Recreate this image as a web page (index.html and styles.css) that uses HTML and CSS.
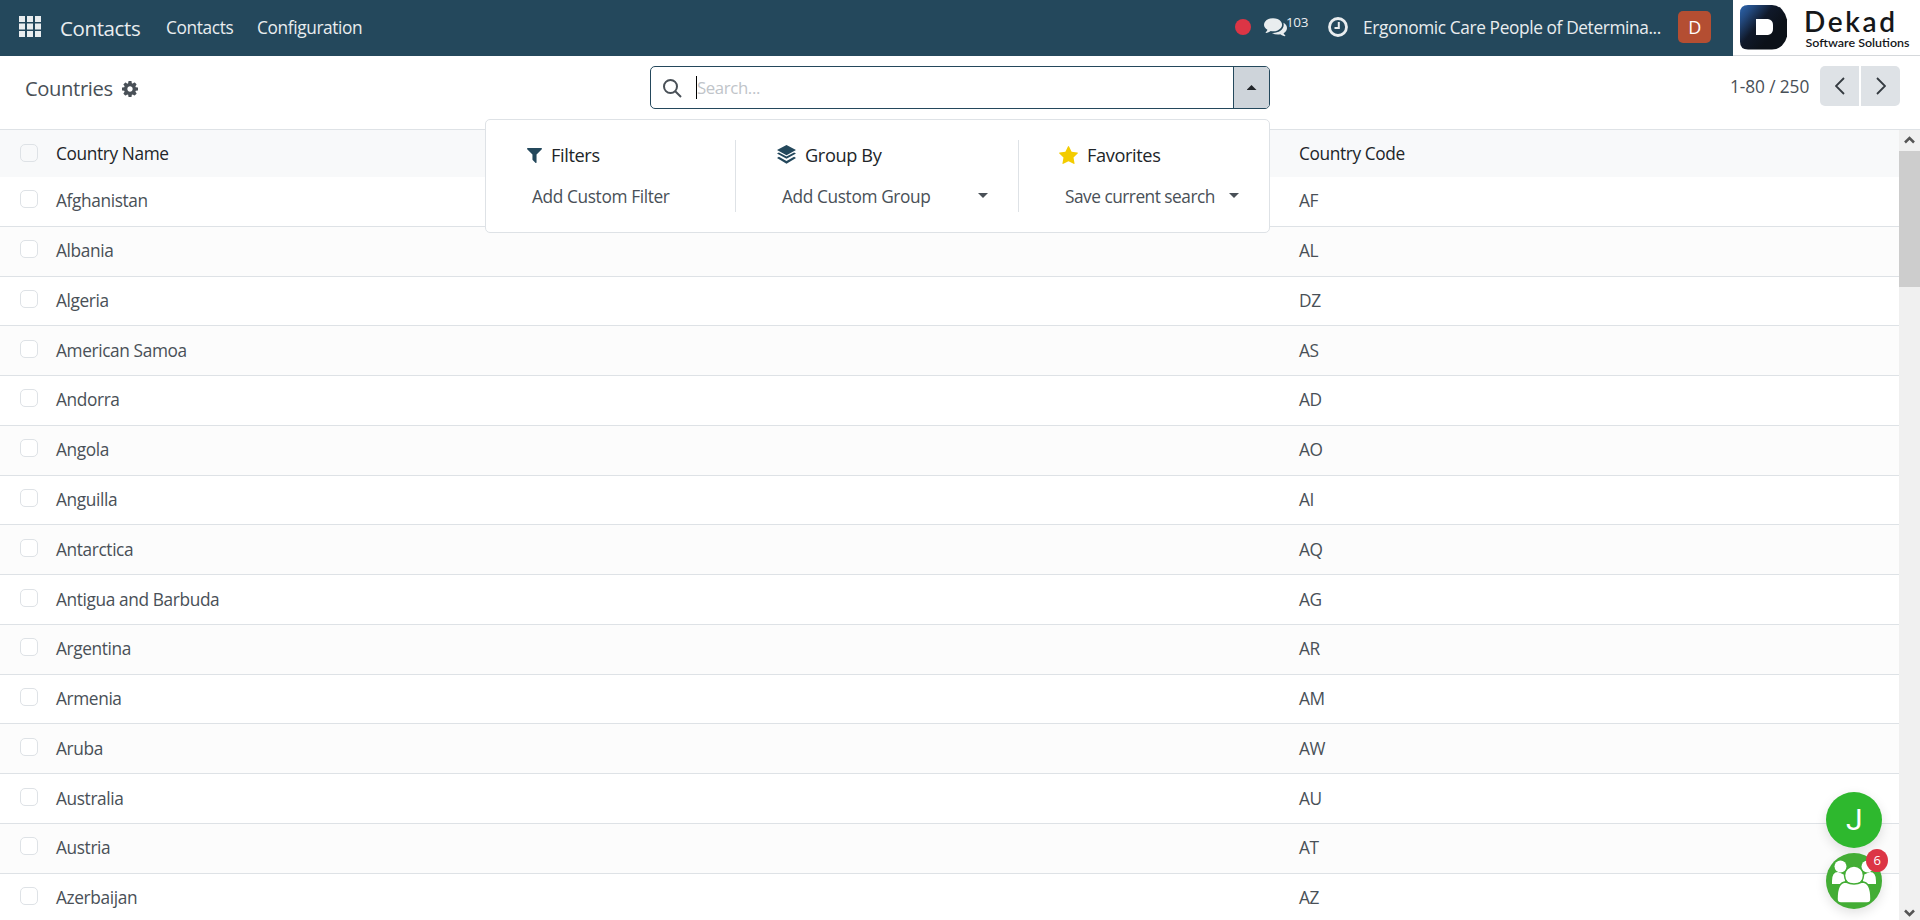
FILE: index.html
```html
<!DOCTYPE html>
<html lang="en">
<head>
  <meta charset="UTF-8">
  <title>Countries</title>
  <link rel="stylesheet" href="styles.css">
</head>
<body>
  <header class="navbar">
    <svg class="apps" viewBox="0 0 22 21"><path d="M0 0h6v6H0zM8 0h6v6H8zM16 0h6v6h-6zM0 7.500h6v6H0zM8 7.500h6v6H8zM16 7.500h6v6h-6zM0 15h6v6H0zM8 15h6v6H8zM16 15h6v6h-6z"/></svg>
    <a class="brand">Contacts</a>
    <a class="menu-contacts">Contacts</a>
    <a class="menu-config">Configuration</a>
    <div class="systray">
      <span class="dot"></span>
      <svg class="comments" viewBox="0 0 1792 1536"><path d="M1408 512q0 139-94 257t-256.500 186.500-353.500 68.500q-86 0-176-16-124 88-278 128-36 9-86 16h-3q-11 0-20.500-8t-11.500-21q-1-3-1-6.500t.5-6.500 2-6l2.500-5 3.500-5.500 4-5 4.500-5 4-4.500q5-6 23-25t26-29.500 22.500-29 25-38.500 20.500-44q-124-72-195-177t-71-224q0-139 94-257t256.500-186.500 353.500-68.500 353.500 68.500 256.500 186.500 94 257zm384 256q0 120-71 224.500t-195 176.500q10 24 20.500 44t25 38.500 22.500 29 26 29.500 23 25q1 1 4 4.500t4.500 5 4 5 3.500 5.500l2.500 5 2 6 .5 6.500-1 6.500q-3 14-13 22t-22 7q-50-7-86-16-154-40-278-128-90 16-176 16-271 0-472-132 58 4 88 4 161 0 309-45t264-129q125-92 192-212t67-254q0-77-23-152 129 71 204 178t75 230z"/></svg>
      <span class="count">103</span>
      <svg class="clock" viewBox="0 0 20 20"><circle cx="10" cy="10" r="8.500"/><path d="M10.800 5v6H6.500"/></svg>
      <span class="company">Ergonomic Care People of Determina...</span>
      <span class="avatar">D</span>
    </div>
    <div class="logo">
      <svg viewBox="0 0 187 55">
        <defs>
          <linearGradient id="logo-bg" x1="0" y1="0" x2="0.75" y2="0.6">
            <stop offset="0" stop-color="#2c65ae"/>
            <stop offset="0.25" stop-color="#234a80"/>
            <stop offset="0.6" stop-color="#10192a"/>
            <stop offset="1" stop-color="#0c1118"/>
          </linearGradient>
        </defs>
        <path fill="url(#logo-bg)" d="M15 5h24q6 0 10 4.500t5 10v17q-1 5-5 9t-10 4H15q-8 0-8-8V13q0-8 8-8z"/>
        <path fill="#fff" d="M23 19h12q5 1 5 6v4q0 5-5 6H23z"/>
        <text class="logo-name" x="71" y="31.500" textLength="91">Dekad</text>
        <text class="logo-sub" x="72.500" y="47" textLength="104" lengthAdjust="spacingAndGlyphs">Software Solutions</text>
      </svg>
    </div>
  </header>

  <div class="control-panel">
    <div class="title">
      <span>Countries</span>
      <svg viewBox="0 0 1536 1536"><path d="M1024 768q0-106-75-181t-181-75-181 75-75 181 75 181 181 75 181-75 75-181zm512-109v222q0 12-8 23t-20 13l-185 28q-19 54-39 91 35 50 107 138 10 12 10 25t-9 23q-27 37-99 108t-94 71q-12 0-26-9l-138-108q-44 23-91 38-16 136-29 186-7 28-36 28h-222q-14 0-24.500-8.500t-11.500-21.500l-28-184q-49-16-90-37l-141 107q-10 9-25 9-14 0-25-11-126-114-165-168-7-10-7-23 0-12 8-23 15-21 51-66.500t54-70.500q-27-50-41-99l-183-27q-13-2-21-12.500t-8-23.500v-222q0-12 8-23t19-13l186-28q14-46 39-92-40-57-107-138-10-12-10-24 0-10 9-23 26-36 98.500-107.500t94.500-71.500q13 0 26 10l138 107q44-23 91-38 16-136 29-186 7-28 36-28h222q14 0 24.500 8.500t11.500 21.500l28 184q49 16 90 37l142-107q9-9 24-9 13 0 25 10 129 119 165 170 7 8 7 22 0 12-8 23-15 21-51 66.500t-54 70.500q26 50 41 98l183 28q13 2 21 12.500t8 23.500z"/></svg>
    </div>
    <div class="search">
      <div class="search-box">
        <svg class="search-icon" viewBox="0 0 19 19"><circle cx="7.500" cy="7.500" r="6.500"/><path d="M12 12l6 6"/></svg>
        <span class="cursor"></span>
        <span class="placeholder">Search...</span>
      </div>
      <div class="search-toggle"><span class="caret up"></span></div>
      <div class="search-menu">
        <div class="menu-col filters">
          <h3><svg viewBox="0 0 1408 1408"><path d="M1403 39q17 41-14 70l-493 493v742q0 42-39 59-13 5-25 5-27 0-45-19l-256-256q-19-19-19-45v-486l-493-493q-31-29-14-70 17-39 59-39h1280q42 0 59 39z"/></svg>Filters</h3>
          <div class="menu-item">Add Custom Filter</div>
        </div>
        <div class="menu-col group-by">
          <h3><svg viewBox="0 0 18 18"><path d="M9 0l9 4.800-9 4.800-9-4.800zM0 8.100l1.800-1L9 11l7.200-3.900 1.800 1-9 4.900zM0 12.200l1.800-1L9 15.100l7.200-3.900 1.800 1L9 17.700z"/></svg>Group By</h3>
          <div class="menu-item">Add Custom Group<span class="caret"></span></div>
        </div>
        <div class="menu-col favorites">
          <h3><svg viewBox="0 0 1664 1587"><path d="M1664 615q0 22-26 48l-363 354 86 500q1 7 1 20 0 21-10.500 35.500t-30.500 14.500q-19 0-40-12l-449-236-449 236q-22 12-40 12-21 0-31.500-14.500t-10.500-35.500q0-6 2-20l86-500-364-354q-25-27-25-48 0-37 56-46l502-73 225-455q19-41 49-41t49 41l225 455 502 73q56 9 56 46z"/></svg>Favorites</h3>
          <div class="menu-item">Save current search<span class="caret"></span></div>
        </div>
      </div>
    </div>
    <div class="pager">
      <span>1-80 / 250</span>
      <button><svg viewBox="0 0 10 18"><path d="M9 1L1 9l8 8"/></svg></button>
      <button><svg viewBox="0 0 10 18"><path d="M1 1l8 8-8 8"/></svg></button>
    </div>
  </div>

  <main class="content">
    <div class="list">
      <div class="row head"><i class="check"></i><span>Country Name</span><span>Country Code</span></div>
      <div class="row"><i class="check"></i><span>Afghanistan</span><span>AF</span></div>
      <div class="row"><i class="check"></i><span>Albania</span><span>AL</span></div>
      <div class="row"><i class="check"></i><span>Algeria</span><span>DZ</span></div>
      <div class="row"><i class="check"></i><span>American Samoa</span><span>AS</span></div>
      <div class="row"><i class="check"></i><span>Andorra</span><span>AD</span></div>
      <div class="row"><i class="check"></i><span>Angola</span><span>AO</span></div>
      <div class="row"><i class="check"></i><span>Anguilla</span><span>AI</span></div>
      <div class="row"><i class="check"></i><span>Antarctica</span><span>AQ</span></div>
      <div class="row"><i class="check"></i><span>Antigua and Barbuda</span><span>AG</span></div>
      <div class="row"><i class="check"></i><span>Argentina</span><span>AR</span></div>
      <div class="row"><i class="check"></i><span>Armenia</span><span>AM</span></div>
      <div class="row"><i class="check"></i><span>Aruba</span><span>AW</span></div>
      <div class="row"><i class="check"></i><span>Australia</span><span>AU</span></div>
      <div class="row"><i class="check"></i><span>Austria</span><span>AT</span></div>
      <div class="row"><i class="check"></i><span>Azerbaijan</span><span>AZ</span></div>
    </div>
    <div class="scrollbar">
      <svg viewBox="0 0 11 8"><path d="M1 6.500l4.500-4.500L10 6.500"/></svg>
      <div class="thumb"></div>
      <svg viewBox="0 0 11 8"><path d="M1 1.500L5.500 6 10 1.500"/></svg>
    </div>
  </main>

  <div class="chat-heads">
    <div class="head-j">J</div>
    <div class="head-group">
      <svg viewBox="0 0 56 56">
        <circle cx="14.500" cy="13.500" r="6"/><circle cx="41.500" cy="13.500" r="6"/>
        <path d="M6 31v-3q0-9 6-9 8 3 8 5l-2 7zM50 31v-3q0-9-6-9-8 3-8 5l2 7z"/>
        <circle class="front" cx="28" cy="22.500" r="9.500"/>
        <path class="front" d="M11 46q0-17 9-17 8 4 16 0 9 0 9 17 0 4-4 4H15q-4 0-4-4z"/>
      </svg>
      <span class="badge">6</span>
    </div>
  </div>
</body>
</html>
```
FILE: styles.css
```css
* { box-sizing: border-box; }
body { margin: 0; height: 920px; overflow: hidden; display: flex; flex-direction: column; position: relative; background: #fff; color: #495057; font-family: "Open Sans", "Noto Sans", sans-serif; font-size: 17.3px; letter-spacing: -0.38px; line-height: 24px; }
svg { display: block; flex: none; }

.navbar { height: 56px; flex: none; background: #24485c; color: #e9edef; display: flex; align-items: center; padding-left: 19px; white-space: nowrap; }
.navbar svg { fill: #e9edef; }
.apps { width: 22px; height: 21px; margin-top: -3px; }
.brand { font-size: 20.5px; margin-left: 19px; width: 106px; }
.menu-contacts { width: 91px; }
.systray { display: flex; align-items: center; margin-left: auto; height: 56px; }
.dot { width: 16px; height: 16px; border-radius: 50%; background: #dc3545; margin: -3px 13px 0 0; }
.comments { width: 23px; height: 20px; }
.count { font-size: 13.5px; width: 42px; margin: -13px 0 0 -1px; }
.navbar .clock { width: 20px; height: 20px; margin: -2px 15px 0 0; fill: none; stroke: #e9edef; stroke-width: 2.8; }
.clock path { stroke-width: 2; }
.company { width: 315px; }
.avatar { width: 33px; height: 32px; margin: -2px 22px 0 0; border-radius: 5px; background: #b44e32; color: #fff; font-size: 18px; line-height: 32px; text-align: center; }
.logo { width: 187px; height: 56px; background: #fff; border-bottom: 1px solid #d5d8db; }
.logo svg { width: 187px; height: 55px; }
.logo text { font-family: Lato, sans-serif; font-weight: 600; fill: #15171a; letter-spacing: 0; }
.logo-name { font-size: 28px; }
.logo-sub { font-size: 12px; }

.control-panel { height: 73px; flex: none; display: flex; padding: 10px 20px 0 25px; }
.title { width: 625px; height: 44px; flex: none; display: flex; align-items: center; font-size: 20.2px; }
.title span { width: 97px; }
.title svg { width: 16px; height: 16px; margin-top: 1px; fill: #495057; }
.search { position: relative; width: 620px; height: 43px; flex: none; display: flex; border: 1px solid #24485c; border-radius: 5px; }
.search-box { flex: 1; display: flex; align-items: center; padding-left: 12px; }
.search-icon { width: 19px; height: 19px; margin-top: 1px; fill: none; stroke: #495057; stroke-width: 2; }
.cursor { width: 1px; height: 23px; margin: 0 0 1px 14px; background: #000; }
.placeholder { color: #c0c4c9; font-size: 16.8px; padding-top: 1px; }
.search-toggle { width: 36px; display: flex; align-items: center; justify-content: center; background: #ced4da; border-left: 1px solid #24485c; border-radius: 0 4px 4px 0; }
.caret { width: 10px; height: 5px; background: #495057; clip-path: polygon(0 0, 100% 0, 50% 100%); }
.caret.up { background: #212529; clip-path: polygon(0 100%, 100% 100%, 50% 0); }
.search-menu { position: absolute; z-index: 2; right: -1px; top: 52px; width: 785px; height: 114px; display: flex; padding: 20px 0; background: #fff; border: 1px solid #dee2e6; border-radius: 5px; }
.menu-col { padding-left: 41px; }
.menu-col + .menu-col { border-left: 1px solid #dee2e6; }
.filters { width: 249px; }
.group-by { width: 283px; }
.favorites { flex: 1; }
.menu-col h3 { display: flex; align-items: center; margin: 3px 0 18px; font-size: 18.2px; font-weight: normal; color: #212529; height: 24px; }
.menu-col svg { fill: #24485c; margin-right: 9px; width: 19px; height: 19px; margin-top: -1px; }
.filters svg { width: 15px; height: 15px; margin-top: 1px; }
.favorites svg { width: 19px; height: 18px; margin-left: -1px; fill: #f3cc00; }
.menu-item { display: flex; align-items: center; margin-left: 5px; white-space: nowrap; }
.menu-item .caret { margin: -3px 30px 0 auto; }
.favorites .menu-item { letter-spacing: -0.5px; }

.pager { width: 170px; height: 40px; margin-left: auto; display: flex; justify-content: flex-end; gap: 2px; line-height: 41px; letter-spacing: -0.1px; }
.pager span { width: 88px; white-space: nowrap; }
.pager button { width: 39px; height: 40px; padding: 0; border: 0; background: #dee2e6; display: flex; align-items: center; justify-content: center; border-radius: 5px 0 0 5px; }
.pager button:last-child { border-radius: 0 5px 5px 0; }
.pager svg { width: 10px; height: 18px; fill: none; stroke: #343a40; stroke-width: 1.8; }

.content { flex: 1; min-height: 0; display: flex; border-top: 1px solid #dee2e6; }
.list { flex: 1; overflow: hidden; }
.row { height: 49.77px; display: grid; grid-template-columns: 36px 1243px 1fr; align-items: center; padding-left: 20px; border-bottom: 1px solid #dee2e6; }
.row:nth-child(odd) { background: #fcfcfc; }
.row.head { height: 47px; background: #f8f9fa; color: #212529; border: 0; }
.check { width: 18px; height: 18px; border: 1px solid #dee2e6; border-radius: 5px; background: #fff; margin-top: -4px; }
.head .check { background: none; margin-top: -1px; }
.scrollbar { width: 21px; background: #f0f0f0; display: flex; flex-direction: column; align-items: center; }
.scrollbar svg { width: 11px; height: 8px; margin: 6px 0 7px; fill: none; stroke: #555; stroke-width: 2.5; }
.scrollbar svg:last-child { margin: auto 0 3px; }
.thumb { width: 21px; height: 136px; background: #cdcdcd; }

.chat-heads { position: absolute; right: 38px; bottom: 11px; display: flex; flex-direction: column; gap: 5px; }
.chat-heads > div { width: 56px; height: 56px; border-radius: 50%; box-shadow: 0 4px 12px rgba(0, 0, 0, .12); position: relative; }
.head-j { background: #2eb82e; color: #fff; font-family: Roboto, sans-serif; font-size: 30px; line-height: 56px; text-align: center; }
.head-group { background: #43ad35; }
.head-group svg { fill: #fff; }
.front { stroke: #43ad35; stroke-width: 1.5; }
.badge { position: absolute; right: -6px; top: -4px; width: 22px; height: 23px; border-radius: 50%; background: #dc3545; color: #fff; font-size: 13px; line-height: 23px; text-align: center; }
```
